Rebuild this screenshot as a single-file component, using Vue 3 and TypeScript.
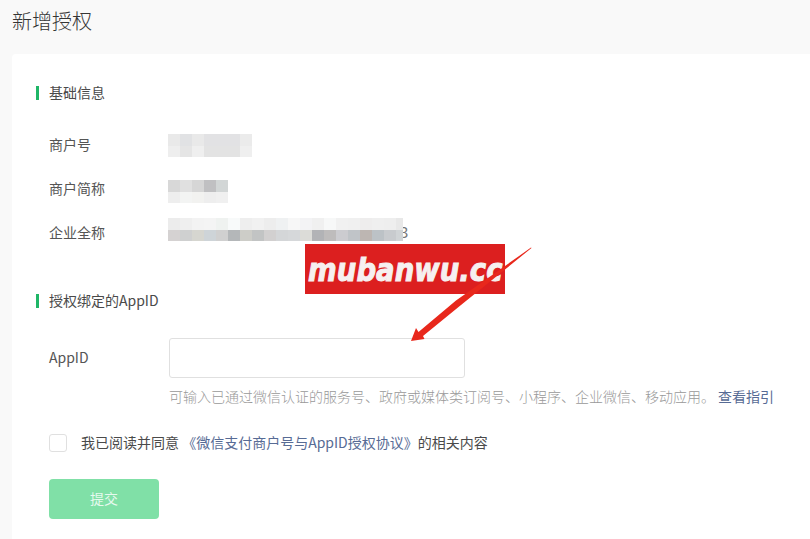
<script setup lang="ts">
const merchantNo: string[][] = [
  ['#e9e9e9', '#e1e2e4', '#e9e9e9', '#e2e2e4', '#e2e2e4', '#e2e2e4', '#ebebeb'],
  ['#eeeeee', '#e5e5e5', '#efefef', '#e3e3e3', '#e3e3e3', '#e3e3e3', '#efefef'],
]
const shortName: string[][] = [
  ['#d8d8d8', '#e0e0e0', '#d6d6d6', '#c0c0c2', '#d2d6d6'],
  ['#eeeeee', '#f3f4f3', '#f2f2f0', '#eeeeee', '#f0f0f0'],
]
const fullName: string[][] = [
  ['#ececec', '#efefef', '#f3f3f3', '#f4f4f4', '#eff2f0', '#f8fafa', '#eeeeee', '#f1f1f1', '#ededed', '#eff1f2', '#f7f7f7', '#f3f3f5', '#f0f0f0', '#f7f8f8', '#f1f1f1', '#f0f0f0', '#eeeded', '#efefef', '#eeeeee', '#e8e8e8'],
  ['#d5d2d2', '#cfd0d0', '#d6d6d0', '#ced4d8', '#d0d0d0', '#b4b7b9', '#cdcdc8', '#c2c4c4', '#d2d0d0', '#d4d6d8', '#d6d8da', '#dcdcd8', '#b2b3b6', '#bebcbc', '#ccccd0', '#c0c4c8', '#bdb6b2', '#bcc2c6', '#c8cbce', '#d0d4d6'],
]
const rows = [
  { label: '商户号', cells: merchantNo, tail: '', nudge: 0 },
  { label: '商户简称', cells: shortName, tail: '', nudge: 4 },
  { label: '企业全称', cells: fullName, tail: '3', nudge: -8 },
]
</script>

<template>
  <div class="page">
    <h1 class="title">新增授权</h1>
    <section class="card">
      <h2 class="head">基础信息</h2>
      <div class="info-list">
        <div v-for="row in rows" :key="row.label" class="info-row">
          <span class="label">{{ row.label }}</span>
          <div class="masked" :style="{ marginTop: row.nudge + 'px' }">
            <div class="mosaic">
              <div v-for="(line, i) in row.cells" :key="i" class="mosaic-line">
                <i v-for="(c, j) in line" :key="j" class="cell" :style="{ background: c }"></i>
              </div>
            </div>
            <span v-if="row.tail" class="tail">{{ row.tail }}</span>
          </div>
        </div>
      </div>

      <h2 class="head head-second">授权绑定的AppID</h2>
      <div class="field">
        <label class="label field-label" for="appid">AppID</label>
        <input id="appid" class="input" type="text" />
      </div>
      <p class="hint">可输入已通过微信认证的服务号、政府或媒体类订阅号、小程序、企业微信、移动应用。 <a class="link">查看指引</a></p>

      <div class="agree">
        <span class="check"></span>
        <span class="agree-text">我已阅读并同意 <a class="link">《微信支付商户号与AppID授权协议》</a>的相关内容</span>
      </div>

      <button class="submit" type="button">提交</button>
    </section>

    <div class="stamp"><span class="stamp-text">mubanwu.cc</span></div>
    <svg class="arrow" width="130" height="100" viewBox="0 0 130 100" aria-hidden="true">
      <polygon points="123.5,2 53,59 15,90 16.5,93 3,95 8,82 10.5,86 48,54.5 123,1.6" fill="#e8281c" />
    </svg>
  </div>
</template>

<style>
html, body { margin: 0; background: #f9f9f9; }
</style>

<style scoped>
.page {
  position: relative;
  width: 810px;
  height: 539px;
  overflow: hidden;
  padding: 0 0 0 12px;
  box-sizing: border-box;
  background: #f9f9f9;
  font-family: "Noto Sans CJK SC", "Noto Sans", sans-serif;
  color: #4a4a4a;
}
.title {
  margin: 0;
  height: 54px;
  padding-top: 6px;
  box-sizing: border-box;
  font-size: 20px;
  line-height: 30px;
  font-weight: 300;
  color: #353535;
}
.card {
  width: 830px;
  height: 520px;
  padding: 32px 0 0 24px;
  box-sizing: border-box;
  background: #fff;
  border-radius: 4px;
}
.head {
  margin: 0;
  padding-left: 10px;
  height: 14px;
  border-left: 3px solid #1fb667;
  font-size: 14px;
  line-height: 12px;
  font-weight: 400;
  color: #4a4a4a;
}
.head-second { margin-top: 49px; }
.info-list {
  display: flex;
  flex-direction: column;
  gap: 21px;
  margin: 34px 0 0 13px;
}
.info-row {
  display: flex;
  align-items: center;
  height: 23px;
}
.label {
  width: 119px;
  flex: none;
  padding-bottom: 3px;
  font-size: 14px;
  line-height: 20px;
  color: #555;
}
.masked {
  display: flex;
  align-items: flex-end;
}
.mosaic {
  position: relative;
  z-index: 1;
  display: flex;
  flex-direction: column;
  max-width: 235px;
  overflow: hidden;
}
.mosaic-line { display: flex; }
.cell { display: block; flex: none; width: 12px; height: 11.5px; }
.tail {
  margin-left: -3px;
  font-size: 15px;
  line-height: 18px;
  color: #777;
}
.field {
  display: flex;
  align-items: center;
  margin: 30px 0 0 13px;
}
.field-label { width: 120px; }
.input {
  width: 296px;
  height: 40px;
  padding: 0 10px;
  box-sizing: border-box;
  background: #fff;
  border: 1px solid #e0e0e0;
  border-radius: 3px;
  outline: none;
}
.hint {
  margin: 8px 0 0 133px;
  font-size: 14px;
  line-height: 20px;
  font-weight: 300;
  color: #999;
  white-space: nowrap;
}
.link { color: #576b95; font-weight: 400; }
.agree {
  display: flex;
  align-items: center;
  margin: 26px 0 0 13px;
}
.check {
  width: 18px;
  height: 18px;
  box-sizing: border-box;
  border: 1px solid #e0e0e0;
  border-radius: 3px;
  background: #fff;
}
.agree-text {
  margin-left: 14px;
  padding-bottom: 2px;
  font-size: 14px;
  line-height: 20px;
  color: #4a4a4a;
  white-space: nowrap;
}
.submit {
  display: block;
  width: 110px;
  height: 40px;
  margin: 25px 0 0 13px;
  padding: 0 0 2px;
  border: none;
  border-radius: 4px;
  background: #80e0a7;
  color: #e6f9ee;
  font-family: inherit;
  font-size: 14px;
}
.stamp {
  position: absolute;
  left: 305px;
  top: 244px;
  width: 200px;
  height: 50px;
  display: flex;
  align-items: center;
  justify-content: center;
  background: #dc1f1f;
  color: #f6f0f0;
  font-family: "DejaVu Sans", sans-serif;
  font-size: 27px;
  font-weight: 700;
  font-style: italic;
  overflow: hidden;
}
.stamp-text {
  display: block;
  transform: scale(1.02, 1.2);
  -webkit-text-stroke: 0.9px #f6f0f0;
}
.arrow {
  position: absolute;
  left: 408px;
  top: 246px;
}
</style>
